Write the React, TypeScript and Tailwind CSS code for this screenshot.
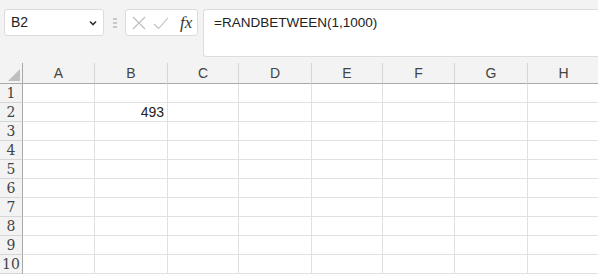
import React from "react";

const cols = [
  { name: "A", w: 72 },
  { name: "B", w: 73 },
  { name: "C", w: 71 },
  { name: "D", w: 73 },
  { name: "E", w: 71 },
  { name: "F", w: 72 },
  { name: "G", w: 73 },
  { name: "H", w: 72 },
];

const rows = [1, 2, 3, 4, 5, 6, 7, 8, 9, 10];

function Chevron() {
  return (
    <svg width="10" height="8" viewBox="0 0 10 8" className="text-[#333]">
      <path d="M2 2.5 L5 5.5 L8 2.5" fill="none" stroke="currentColor" strokeWidth="1.6" />
    </svg>
  );
}

function FormulaBar() {
  return (
    <div className="flex h-[63px] items-start bg-[#f3f3f3] pl-[4px] pt-[9px]">
      {/* name box */}
      <div className="flex h-[27px] w-[100px] items-center justify-between rounded-[3px] border border-[#dcdcdc] bg-white pl-[6px] pr-[5px] text-[14px] text-[#222]">
        <span className="font-['Liberation_Sans',sans-serif]">B2</span>
        <Chevron />
      </div>
      {/* grip */}
      <div className="flex h-[27px] w-[21px] flex-col items-center justify-center gap-[2px]">
        {[0, 1, 2].map((i) => (
          <div key={i} className="h-[2px] w-[4px] bg-[#c8c8c8]" />
        ))}
      </div>
      {/* cancel / enter / fx */}
      <div className="flex h-[27px] w-[73px] items-center rounded-[3px] border border-[#dcdcdc] bg-white pl-[6px]">
        <svg width="14" height="14" viewBox="0 0 14 14">
          <path d="M1 1 L13 13 M13 1 L1 13" stroke="#bdbdbd" strokeWidth="1.1" />
        </svg>
        <svg width="16" height="14" viewBox="0 0 16 14" className="ml-[7px]">
          <path d="M1 8 L5.5 12.5 L15 2" fill="none" stroke="#bdbdbd" strokeWidth="1.1" />
        </svg>
        <span className="ml-[11px] font-['Liberation_Serif',serif] text-[17px] italic leading-none text-[#333]">fx</span>
      </div>
      {/* formula input */}
      <div className="ml-[5px] h-[48px] flex-1 rounded-l-[3px] border border-r-0 border-[#dcdcdc] bg-white pl-[10px] pt-[3px] font-['Liberation_Sans',sans-serif] text-[13.5px] text-[#222]">
        =RANDBETWEEN(1,1000)
      </div>
    </div>
  );
}

function Grid() {
  return (
    <div className="font-['Liberation_Sans',sans-serif] text-[14px] text-[#333]">
      <div className="flex h-[21px] bg-[#f3f3f3]">
        <div className="relative w-[23px] shrink-0 border-b border-r border-[#a9a9a9]">
          <svg width="12" height="12" viewBox="0 0 12 12" className="absolute bottom-[2px] right-[2px]">
            <path d="M12 0 L12 12 L0 12 Z" fill="#bfbfbf" />
          </svg>
        </div>
        {cols.map((c) => (
          <div
            key={c.name}
            style={{ width: c.w }}
            className="flex shrink-0 items-center justify-center border-b border-r border-b-[#a9a9a9] border-r-[#d6d6d6] text-[#444]"
          >
            {c.name}
          </div>
        ))}
      </div>
      {rows.map((r) => (
        <div key={r} className="flex h-[19px]">
          <div className="flex w-[23px] shrink-0 items-center justify-center border-b border-r border-b-[#d6d6d6] border-r-[#a9a9a9] bg-[#f3f3f3] font-['DejaVu_Serif',serif] text-[14px] text-[#444]">
            {r}
          </div>
          {cols.map((c) => (
            <div
              key={c.name}
              style={{ width: c.w }}
              className="flex shrink-0 items-center justify-end border-b border-r border-[#e1e1e1] bg-white pr-[3px] text-[14px] text-[#222]"
            >
              {r === 2 && c.name === "B" ? "493" : ""}
            </div>
          ))}
        </div>
      ))}
    </div>
  );
}

export default function App() {
  return (
    <div className="h-[277px] w-[598px] overflow-hidden bg-white">
      <FormulaBar />
      <Grid />
    </div>
  );
}
